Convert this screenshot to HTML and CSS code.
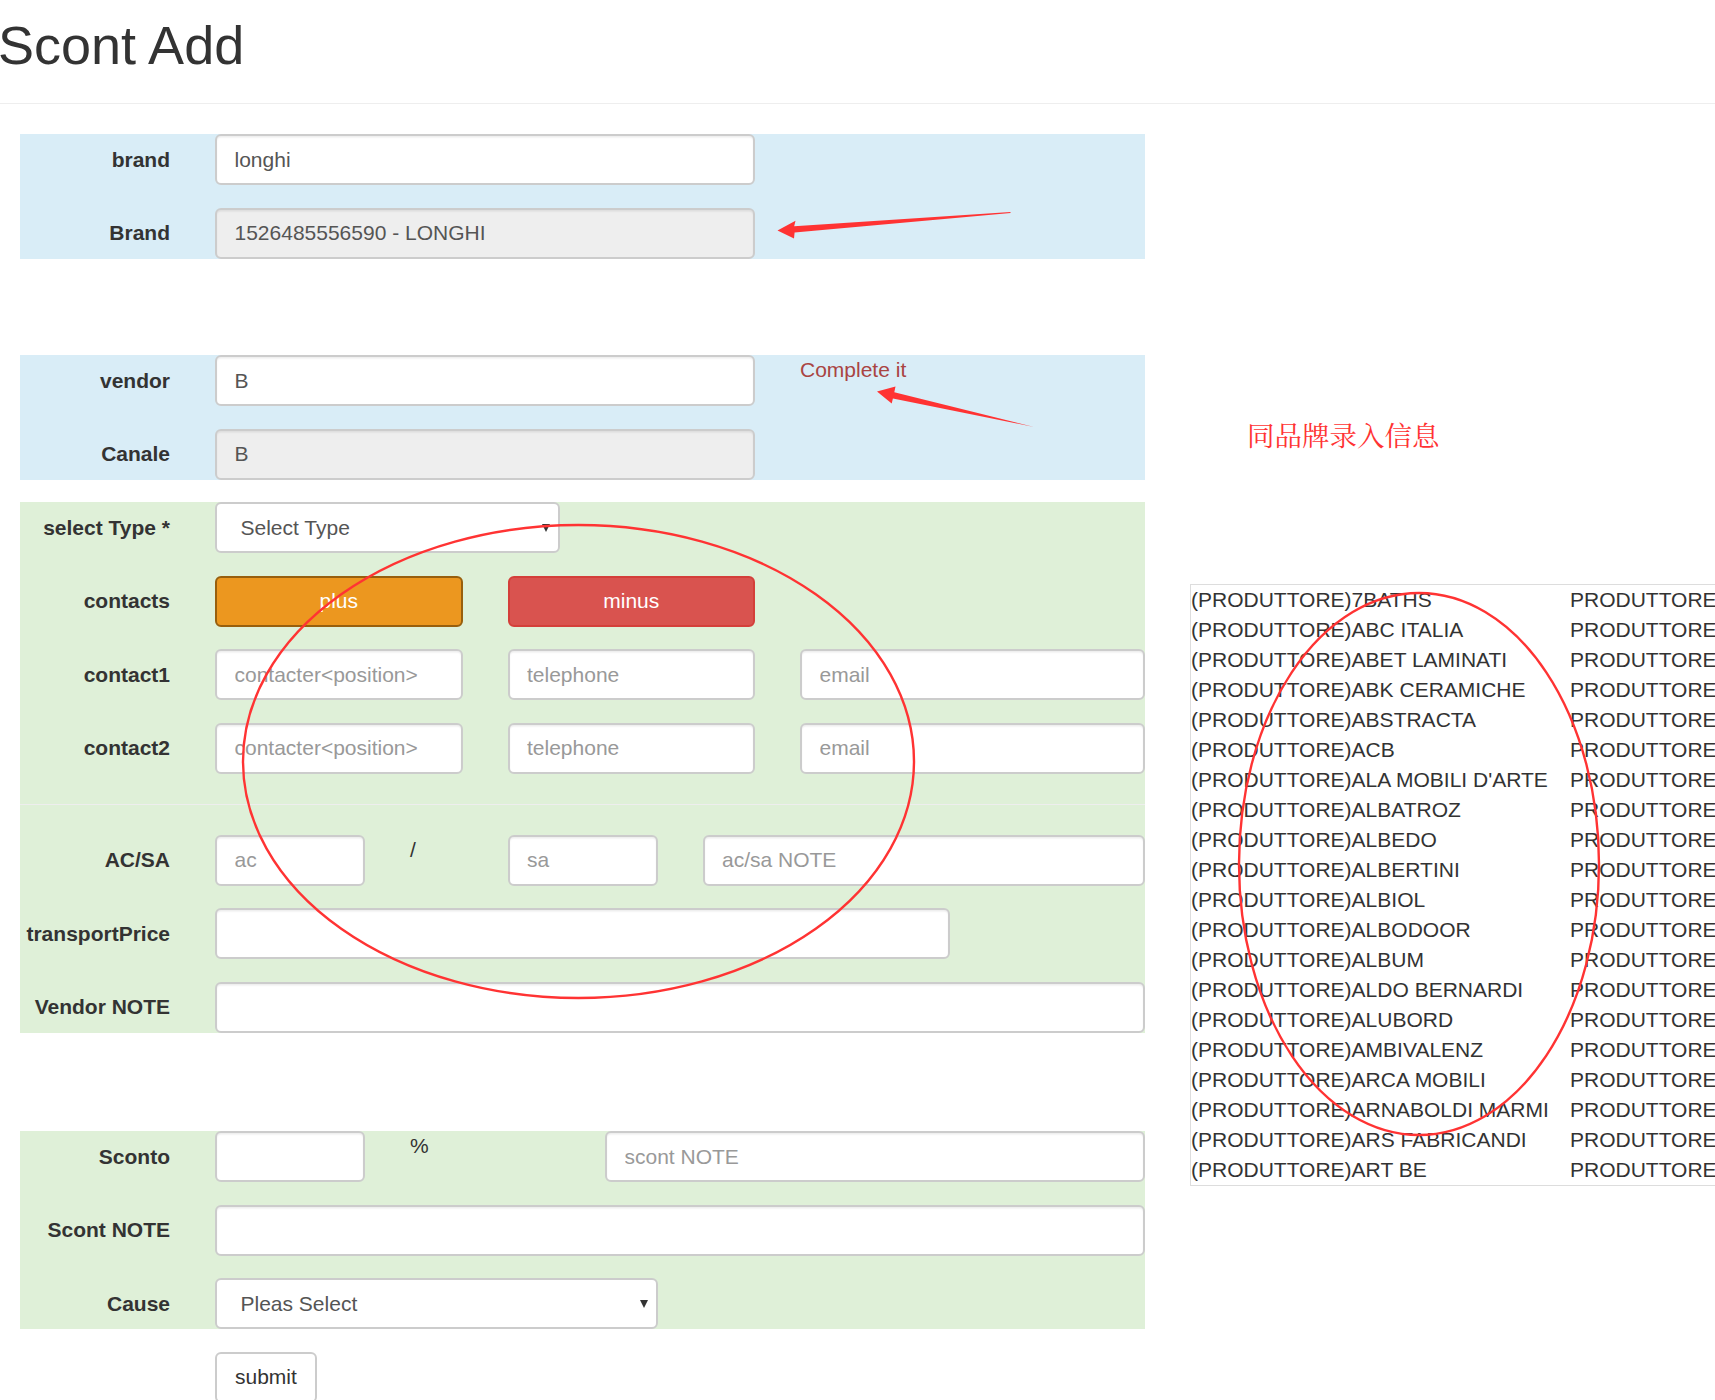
FILE: index.html
```html
<!DOCTYPE html>
<html lang="en">
<head>
<meta charset="utf-8">
<title>Scont Add</title>
<link rel="stylesheet" href="styles.css">
</head>
<body>
<div class="page-header"><h1>Scont Add</h1></div>
<div class="layout">
  <form class="form-col">
    <div class="panel info">
      <div class="row"><label class="lbl">brand</label><div class="col c6"><input class="fc" value="longhi"></div></div>
      <div class="row"><label class="lbl">Brand</label><div class="col c6"><input class="fc ro" value="1526485556590 - LONGHI" readonly></div></div>
    </div>
    <div class="panel info gap-big">
      <div class="row"><label class="lbl">vendor</label><div class="col c6"><input class="fc" value="B"></div><div class="col c4 help">Complete it</div></div>
      <div class="row"><label class="lbl">Canale</label><div class="col c6"><input class="fc ro" value="B" readonly></div></div>
    </div>
    <div class="panel success gap">
      <div class="row"><label class="lbl">select Type *</label><div class="col c4"><div class="sel"><span>Select Type</span><span class="caret"></span></div></div></div>
      <div class="row"><label class="lbl">contacts</label><div class="col c3"><button type="button" class="btn warn">plus</button></div><div class="col c3"><button type="button" class="btn danger">minus</button></div></div>
      <div class="row"><label class="lbl">contact1</label><div class="col c3"><input class="fc" placeholder="contacter&lt;position&gt;"></div><div class="col c3"><input class="fc" placeholder="telephone"></div><div class="col c4"><input class="fc" placeholder="email"></div></div>
      <div class="row"><label class="lbl">contact2</label><div class="col c3"><input class="fc" placeholder="contacter&lt;position&gt;"></div><div class="col c3"><input class="fc" placeholder="telephone"></div><div class="col c4"><input class="fc" placeholder="email"></div></div>
      <hr class="sep">
      <div class="row"><label class="lbl">AC/SA</label><div class="col c2"><input class="fc" placeholder="ac"></div><div class="col c1 plain">/</div><div class="col c2"><input class="fc" placeholder="sa"></div><div class="col c5"><input class="fc" placeholder="ac/sa NOTE"></div></div>
      <div class="row"><label class="lbl">transportPrice</label><div class="col c8"><input class="fc"></div></div>
      <div class="row"><label class="lbl">Vendor NOTE</label><div class="col c10"><input class="fc"></div></div>
    </div>
    <div class="panel success gap-big2">
      <div class="row"><label class="lbl">Sconto</label><div class="col c2"><input class="fc"></div><div class="col c1 plain">%</div><div class="col c1"></div><div class="col c6"><input class="fc" placeholder="scont NOTE"></div></div>
      <div class="row"><label class="lbl">Scont NOTE</label><div class="col c10"><input class="fc"></div></div>
      <div class="row"><label class="lbl">Cause</label><div class="col c5"><div class="sel"><span>Pleas Select</span><span class="caret"></span></div></div></div>
    </div>
    <div class="row submit-row"><div class="col c10 off2"><button type="button" class="btn dflt">submit</button></div></div>
  </form>
  <aside class="side-col">
    <div class="cn-note">同品牌录入信息</div>
    <div class="brand-table">
      <div class="tr"><span>(PRODUTTORE)7BATHS</span><span>PRODUTTORE</span></div>
      <div class="tr"><span>(PRODUTTORE)ABC ITALIA</span><span>PRODUTTORE</span></div>
      <div class="tr"><span>(PRODUTTORE)ABET LAMINATI</span><span>PRODUTTORE</span></div>
      <div class="tr"><span>(PRODUTTORE)ABK CERAMICHE</span><span>PRODUTTORE</span></div>
      <div class="tr"><span>(PRODUTTORE)ABSTRACTA</span><span>PRODUTTORE</span></div>
      <div class="tr"><span>(PRODUTTORE)ACB</span><span>PRODUTTORE</span></div>
      <div class="tr"><span>(PRODUTTORE)ALA MOBILI D'ARTE</span><span>PRODUTTORE</span></div>
      <div class="tr"><span>(PRODUTTORE)ALBATROZ</span><span>PRODUTTORE</span></div>
      <div class="tr"><span>(PRODUTTORE)ALBEDO</span><span>PRODUTTORE</span></div>
      <div class="tr"><span>(PRODUTTORE)ALBERTINI</span><span>PRODUTTORE</span></div>
      <div class="tr"><span>(PRODUTTORE)ALBIOL</span><span>PRODUTTORE</span></div>
      <div class="tr"><span>(PRODUTTORE)ALBODOOR</span><span>PRODUTTORE</span></div>
      <div class="tr"><span>(PRODUTTORE)ALBUM</span><span>PRODUTTORE</span></div>
      <div class="tr"><span>(PRODUTTORE)ALDO BERNARDI</span><span>PRODUTTORE</span></div>
      <div class="tr"><span>(PRODUTTORE)ALUBORD</span><span>PRODUTTORE</span></div>
      <div class="tr"><span>(PRODUTTORE)AMBIVALENZ</span><span>PRODUTTORE</span></div>
      <div class="tr"><span>(PRODUTTORE)ARCA MOBILI</span><span>PRODUTTORE</span></div>
      <div class="tr"><span>(PRODUTTORE)ARNABOLDI MARMI</span><span>PRODUTTORE</span></div>
      <div class="tr"><span>(PRODUTTORE)ARS FABRICANDI</span><span>PRODUTTORE</span></div>
      <div class="tr"><span>(PRODUTTORE)ART BE</span><span>PRODUTTORE</span></div>
    </div>
  </aside>
</div>
<svg class="marks" width="1715" height="1400" viewBox="0 0 1715 1400" aria-hidden="true">
  <ellipse cx="578.5" cy="761.5" rx="335.5" ry="236.5" fill="none" stroke="#ff3333" stroke-width="2.4"/>
  <ellipse cx="1419" cy="864" rx="180" ry="271" fill="none" stroke="#ff3333" stroke-width="2.4"/>
  <polygon points="777.5,230.5 795.5,220.8 794.2,226.3 1010.5,212 1010.5,213 794.6,232.4 794,238.5" fill="#ff3333"/>
  <polygon points="877,391.5 895.5,386.5 894.3,392.3 1034,427 892.9,398.4 891.7,403.6" fill="#ff3333"/>
</svg>
</body>
</html>
```

FILE: styles.css
```css
* { box-sizing: border-box; }
html, body { margin: 0; padding: 0; overflow: hidden; }
body {
  position: relative;
  width: 1715px;
  height: 1400px;
  background: #fff;
  color: #333;
  font-family: "Liberation Sans", Arial, Helvetica, sans-serif;
  font-size: 21px;
  line-height: 30px;
}
.page-header {
  padding: 16px 0 13.4px;
  border-bottom: 1px solid #eee;
}
.page-header h1 {
  margin: 0 0 14px -2px;
  font-size: 54px;
  font-weight: 500;
  line-height: 59.4px;
  color: #333;
}
.layout {
  display: flex;
  align-items: flex-start;
  margin-top: 30.7px;
}
.form-col {
  flex: none;
  width: 1125px;
  margin: 0 0 0 20px;
}
.side-col {
  flex: none;
  width: 700px;
  margin-left: 45px;
  padding-top: 281.5px;
}
.panel.info { background: #d9edf7; }
.panel.success { background: #dff0d8; }
.gap { margin-top: 22.5px; }
.gap-big { margin-top: 96.5px; }
.gap-big2 { margin-top: 98.5px; }
.row {
  display: grid;
  grid-template-columns: repeat(12, 97.5px);
  margin: 0 -22.5px;
}
.row + .row { margin-top: 22.5px; }
.submit-row { margin-top: 22.5px; }
.col { padding: 0 22.5px; }
.c1 { grid-column: span 1; }
.c2 { grid-column: span 2; }
.c3 { grid-column: span 3; }
.c4 { grid-column: span 4; }
.c5 { grid-column: span 5; }
.c6 { grid-column: span 6; }
.c8 { grid-column: span 8; }
.c10 { grid-column: span 10; }
.off2 { grid-column: 3 / span 10; }
.lbl {
  grid-column: span 2;
  padding: 10.5px 22.5px 0;
  text-align: right;
  font-weight: bold;
  line-height: 30px;
  white-space: nowrap;
}
.plain { line-height: 30px; }
.help { color: #a94442; line-height: 30px; }
.sep {
  margin: 30px 0;
  border: 0;
  border-top: 1px solid #eee;
  height: 0;
}
.fc {
  display: block;
  width: 100%;
  height: 51px;
  padding: 0 17.5px;
  border: 2px solid #ccc;
  border-radius: 6px;
  background: #fff;
  box-shadow: inset 0 1.5px 1.5px rgba(0, 0, 0, 0.075);
  color: #555;
  font-family: "Liberation Sans", Arial, Helvetica, sans-serif;
  font-size: 21px;
  outline: none;
}
.fc::placeholder { color: #999; opacity: 1; }
.fc.ro { background: #eee; }
.sel {
  display: flex;
  align-items: center;
  justify-content: space-between;
  height: 51px;
  padding: 0 8px 0 23.5px;
  border: 2px solid #ccc;
  border-radius: 6px;
  background: #fff;
  color: #555;
}
.caret {
  width: 0;
  height: 0;
  border-left: 4.5px solid transparent;
  border-right: 4.5px solid transparent;
  border-top: 8px solid #333;
}
.btn {
  display: block;
  width: 100%;
  height: 51px;
  padding: 0 18px;
  border-radius: 6px;
  font-family: "Liberation Sans", Arial, Helvetica, sans-serif;
  font-size: 21px;
  line-height: 30px;
  color: #fff;
  text-align: center;
}
.btn.warn { background: #ec971f; border: 2px solid #985f0d; }
.btn.danger { background: #d9534f; border: 2px solid #d43f3a; }
.btn.dflt {
  width: auto;
  background: #fff;
  border: 2px solid #ccc;
  color: #333;
}
.cn-note {
  margin-left: 57px;
  font-family: "Noto Serif CJK SC", "Noto Sans CJK SC", serif;
  font-size: 27.5px;
  line-height: 36px;
  color: #ff3333;
}
.brand-table {
  margin-top: 132px;
  border: 1px solid #ddd;
  width: 700px;
}
.tr {
  display: grid;
  grid-template-columns: 379px auto;
  line-height: 30px;
  white-space: nowrap;
  color: #333;
}
.marks {
  position: absolute;
  left: 0;
  top: 0;
  pointer-events: none;
}
```
